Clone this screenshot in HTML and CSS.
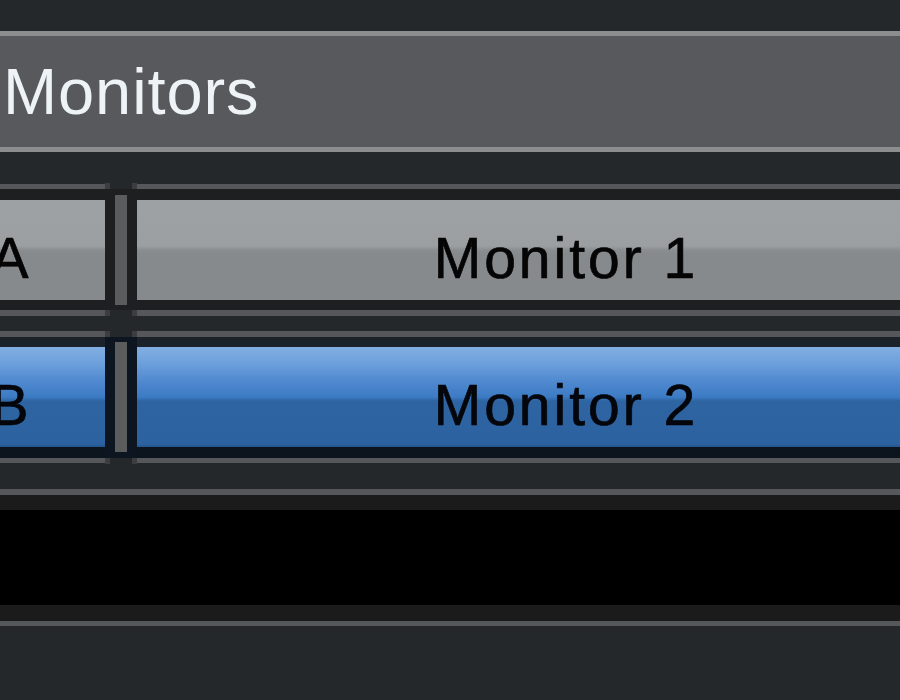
FILE: index.html
```html
<!DOCTYPE html>
<html>
<head>
<meta charset="utf-8">
<link rel="stylesheet" href="styles.css">
</head>
<body>
<div class="page">
  <div class="top-gap"></div>
  <div class="header"><span class="title">Monitors</span></div>
  <div class="gap-a"></div>
  <div class="row">
    <div class="cell cell-left">A</div>
    <div class="split"><div class="split-bar"></div></div>
    <div class="cell cell-main">Monitor 1</div>
  </div>
  <div class="gap-b"></div>
  <div class="row row-selected">
    <div class="cell cell-left">B</div>
    <div class="split"><div class="split-bar"></div></div>
    <div class="cell cell-main">Monitor 2</div>
  </div>
  <div class="gap-c"></div>
  <div class="well"><div class="well-inner"></div></div>
</div>
</body>
</html>
```

FILE: styles.css
```css
html, body {
  margin: 0;
  padding: 0;
  background: #25282b;
}
.page {
  width: 900px;
  height: 700px;
  overflow: hidden;
  background: #25282b;
  font-family: "Liberation Sans", Arial, sans-serif;
}
.top-gap { height: 31px; }
.header {
  height: 111px;
  background: #58595d;
  border-top: 5px solid #8c8d8f;
  border-bottom: 5px solid #8c8d8f;
  padding-left: 3px;
  line-height: 111px;
  font-size: 65px;
  letter-spacing: 0.9px;
  color: #eef3f8;
  white-space: nowrap;
}
.gap-a { height: 32px; }
.gap-b { height: 15px; }
.gap-c { height: 26px; }

.row {
  display: flex;
  background: #1e1f21;
  border-top: 5px solid #56575a;
  border-bottom: 6px solid #56575a;
  padding: 11px 0 10px;
}
.row-selected {
  border-top-width: 6px;
  border-bottom-width: 5px;
  padding: 10px 0 11px;
  background: linear-gradient(to bottom, #1b222a 0, #1b222a 10px, #0c141e 10px);
}
.cell {
  flex: 0 0 auto;
  height: 100px;
  box-sizing: border-box;
  padding-top: 16px;
  line-height: 84px;
  font-size: 57px;
  letter-spacing: 3px;
  color: #050505;
  -webkit-text-stroke: 0.7px #050505;
  white-space: nowrap;
  background: linear-gradient(to bottom, #9ea1a3 0, #9c9fa1 46%, #8b8e90 50%, #878a8c 54%, #878a8c 100%);
}
.row-selected .cell {
  color: #04060c;
  -webkit-text-stroke: 0.7px #04060c;
  background: linear-gradient(to bottom, #82afe2 0%, #6a9edb 18%, #5089d0 34%, #3c7bc4 50%, #3570b4 52%, #2e64a1 54%, #2c62a0 97%, #24558c 100%);
}
.cell-left {
  width: 188px;
  margin-left: -83px;
  text-align: center;
}
.cell-main {
  width: 858px;
  text-align: center;
}
.split {
  position: relative;
  flex: 0 0 32px;
  margin: -11px 0 -10px;
  padding: 6px 0 5px;
  display: flex;
  justify-content: center;
  background: #1e1f21;
}
.row-selected .split {
  margin: -10px 0 -11px;
  padding: 5px 0 6px;
  background: #0d1520;
}
.split-bar {
  width: 12px;
  background: #5b5c5e;
}
.split::before,
.split::after {
  content: "";
  position: absolute;
  left: 5px;
  width: 22px;
  height: 6px;
  background: #25282b;
  box-shadow: -5px 0 0 #3c3d40, 5px 0 0 #3c3d40;
}
.split::before { top: -6px; }
.split::after { bottom: -6px; }

.well {
  border-top: 6px solid #56575a;
  border-bottom: 5px solid #56575a;
  background: #1b1b1b;
  padding: 15px 0 16px;
}
.well-inner {
  height: 95px;
  background: #000000;
}
```
